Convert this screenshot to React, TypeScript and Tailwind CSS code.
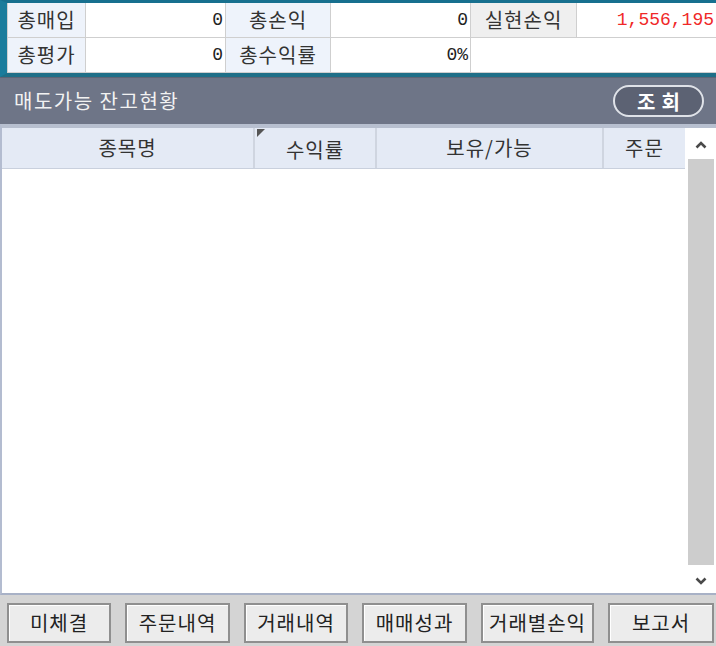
const KR = { fontFamily: '"Noto Sans CJK KR", "Noto Sans", sans-serif' };
const NUM = { fontFamily: '"Liberation Mono", "DejaVu Sans Mono", monospace' };

const BUTTONS = [
  { label: '미체결', w: 'w-[104px]' },
  { label: '주문내역', w: 'w-[105px]' },
  { label: '거래내역', w: 'w-[104px]' },
  { label: '매매성과', w: 'w-[105px]' },
  { label: '거래별손익', w: 'w-[113px]' },
  { label: '보고서', w: 'w-[106px]' },
];

function Label({ children, gray }: { children: React.ReactNode; gray?: boolean }) {
  return (
    <div
      className={`flex items-center justify-center text-[20px] tracking-[1px] text-[#333] ${
        gray ? 'bg-[#efefef]' : 'bg-[#eef3fb]'
      }`}
    >
      {children}
    </div>
  );
}

function Value({ children, red }: { children?: React.ReactNode; red?: boolean }) {
  return (
    <div
      style={NUM}
      className={`flex items-center justify-end bg-white pr-[2px] text-[18px] ${
        red ? 'text-[#f02828]' : 'text-[#222]'
      }`}
    >
      {children}
    </div>
  );
}

function Chevron({ down }: { down?: boolean }) {
  return (
    <svg width="12" height="8" viewBox="0 0 12 8" className="text-[#4a4a4a]">
      <path
        d={down ? 'M1.5 1.5 L6 6 L10.5 1.5' : 'M1.5 6.5 L6 2 L10.5 6.5'}
        fill="none"
        stroke="currentColor"
        strokeWidth="2.6"
      />
    </svg>
  );
}

export default function App() {
  return (
    <div style={KR} className="w-[716px] h-[646px] bg-[#d4d4d4] flex flex-col overflow-hidden">
      {/* Summary */}
      <div className="border-t-[3px] border-l-[7px] border-b-[4px] border-t-[#17708f] border-l-[#1a7c9c] border-b-[#1f6f88] bg-[#cfcfcf] pl-px pb-px">
        <div className="grid grid-cols-[77px_139px_104px_139px_105px_1fr] grid-rows-[34px_34px] gap-px">
          <Label>총매입</Label>
          <Value>0</Value>
          <Label>총손익</Label>
          <Value>0</Value>
          <Label gray>실현손익</Label>
          <Value red>1,556,195</Value>
          <Label>총평가</Label>
          <Value>0</Value>
          <Label>총수익률</Label>
          <Value>0%</Value>
          <div className="col-span-2 bg-white" />
        </div>
      </div>

      {/* Title bar */}
      <div className="h-[47px] bg-[#6e7587] border-t border-[#5d6474] flex items-center justify-between pl-[14px] pr-[12px]">
        <span className="text-[20px] text-[#f2f2f2] tracking-[1.5px]">매도가능 잔고현황</span>
        <button className="w-[91px] h-[32px] rounded-full border-2 border-[#dfe2e8] bg-[#5c6273] text-white text-[20px] font-bold tracking-[6px] pl-[6px]">
          조회
        </button>
      </div>

      {/* Table */}
      <div className="flex-1 flex flex-col bg-white border-t-[4px] border-t-[#b7bfcf] border-l-2 border-l-[#b3bcd0] border-b-2 border-b-[#a8b1c6]">
        <div className="flex flex-1 min-h-0">
          <div className="flex-1 flex flex-col">
            <div className="h-[41px] flex bg-[#e4eaf5] border-b border-[#c9d0dd] text-[20px] tracking-[1px] text-[#333]">
              <div className="w-[253px] flex items-center justify-center border-r-2 border-[#cfd5e0]">종목명</div>
              <div className="relative w-[122px] flex items-center justify-center border-r-2 border-[#cfd5e0] pt-[4px]">
                <span className="absolute left-[2px] top-[1px] w-0 h-0 border-t-[8px] border-r-[8px] border-t-[#555] border-r-transparent" />
                수익률
              </div>
              <div className="w-[227px] flex items-center justify-center border-r-2 border-[#cfd5e0]">보유/가능</div>
              <div className="flex-1 flex items-center justify-center">주문</div>
            </div>
          </div>
          {/* Scrollbar */}
          <div className="w-[31px] flex flex-col items-center bg-white pt-[13px] pb-[8px]">
            <Chevron />
            <div className="w-[26px] flex-1 bg-[#cdcdcd] mt-[10px] mb-[12px]" />
            <Chevron down />
          </div>
        </div>
      </div>

      {/* Buttons */}
      <div className="h-[51px] flex items-center gap-[14px] pl-[7px] pt-[4px]">
        {BUTTONS.map((b) => (
          <button
            key={b.label}
            className={`${b.w} h-[40px] bg-[#ececec] border-2 border-[#8f8f8f] text-[20px] tracking-[1px] text-[#222] shadow-[inset_1px_1px_0_#fff]`}
          >
            {b.label}
          </button>
        ))}
      </div>
    </div>
  );
}
